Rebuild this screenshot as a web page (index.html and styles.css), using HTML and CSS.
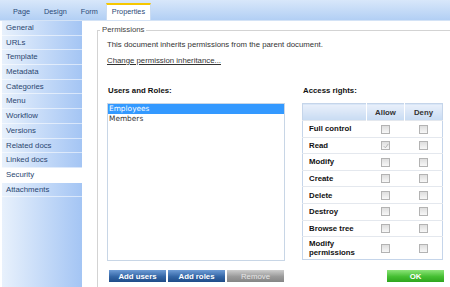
FILE: index.html
```html
<!DOCTYPE html>
<html lang="en">
<head>
    <meta charset="UTF-8">
    <title>Document properties - Security</title>
    <link rel="stylesheet" href="styles.css">
</head>
<body>
    <!-- Tabs -->
    <div class="tabbar">
        <span class="tab">Page</span>
        <span class="tab">Design</span>
        <span class="tab">Form</span>
        <span class="tab tab-active">Properties</span>
    </div>

    <div class="main">
        <!-- Left menu -->
        <ul class="side-menu">
            <li>General</li>
            <li>URLs</li>
            <li>Template</li>
            <li>Metadata</li>
            <li>Categories</li>
            <li>Menu</li>
            <li>Workflow</li>
            <li>Versions</li>
            <li>Related docs</li>
            <li>Linked docs</li>
            <li class="selected">Security</li>
            <li>Attachments</li>
        </ul>

        <div class="content">
            <fieldset class="perm">
                <legend>Permissions</legend>
                <div class="perm-body">
                    <p class="info">This document inherits permissions from the parent document.</p>
                    <p class="info"><a href="#" class="link">Change permission inheritance...</a></p>

                    <div class="columns">
                        <div class="users-col">
                            <div class="label">Users and Roles:</div>
                            <div class="listbox">
                                <div class="list-item sel">Employees</div>
                                <div class="list-item">Members</div>
                            </div>
                            <div class="buttons">
                                <button class="btn btn-blue">Add users</button>
                                <button class="btn btn-blue">Add roles</button>
                                <button class="btn btn-grey">Remove</button>
                            </div>
                        </div>

                        <div class="rights-col">
                            <div class="label">Access rights:</div>
                            <table class="rights">
                                <tr class="head">
                                    <th></th>
                                    <th class="c">Allow</th>
                                    <th class="c">Deny</th>
                                </tr>
                                <tr><td>Full control</td><td class="c"><span class="cb"></span></td><td class="c"><span class="cb"></span></td></tr>
                                <tr><td>Read</td><td class="c"><span class="cb checked"><svg width="6" height="6" viewBox="0 0 6 6"><path d="M0.8 3.2 L2.4 4.8 L5.3 0.9" fill="none" stroke="#b4b4b4" stroke-width="1"/></svg></span></td><td class="c"><span class="cb"></span></td></tr>
                                <tr><td>Modify</td><td class="c"><span class="cb"></span></td><td class="c"><span class="cb"></span></td></tr>
                                <tr><td>Create</td><td class="c"><span class="cb"></span></td><td class="c"><span class="cb"></span></td></tr>
                                <tr><td>Delete</td><td class="c"><span class="cb"></span></td><td class="c"><span class="cb"></span></td></tr>
                                <tr><td>Destroy</td><td class="c"><span class="cb"></span></td><td class="c"><span class="cb"></span></td></tr>
                                <tr><td>Browse tree</td><td class="c"><span class="cb"></span></td><td class="c"><span class="cb"></span></td></tr>
                                <tr class="tall"><td>Modify<br>permissions</td><td class="c"><span class="cb"></span></td><td class="c"><span class="cb"></span></td></tr>
                            </table>
                            <div class="ok-row">
                                <button class="btn btn-green">OK</button>
                            </div>
                        </div>
                    </div>
                </div>
            </fieldset>
        </div>
    </div>
</body>
</html>
```

FILE: styles.css
```css
html, body {
    margin: 0;
    padding: 0;
    height: 287px;
    overflow: hidden;
}
body {
    font-family: "Liberation Sans", Arial, sans-serif;
    font-size: 7.8px;
    color: #333;
    background: #fff;
}
.tabbar {
    height: 20px;
    padding-left: 6px;
    display: flex;
    align-items: flex-end;
    background: linear-gradient(#d8e7fa, #b2cff4);
    border-bottom: 1px solid #d4e3f6;
}
.tab {
    padding: 0 7px;
    height: 15px;
    line-height: 13px;
    font-size: 7.3px;
    color: #2b4a78;
}
.tab-active {
    background-color: #fff;
    border-top: 2px solid #f6c700;
    border-left: 1px solid #c9dbf2;
    border-right: 1px solid #c9dbf2;
    height: 15px;
    padding: 0 5px;
    margin-left: 1px;
    color: #2b4a78;
}
.main {
    display: flex;
}
.side-menu {
    list-style: none;
    margin: 0 0 0 2px;
    padding: 0;
    width: 80px;
    height: 266px;
    background: linear-gradient(to right, #e8f1fc, #a4c5f4);
}
.side-menu li {
    height: 13.7px;
    line-height: 13.7px;
    padding-left: 4px;
    color: #2a4670;
    border-bottom: 1px solid rgba(255, 255, 255, 0.55);
}
.side-menu li.selected {
    background-color: #fff;
}
.content {
    flex: 1;
    padding-left: 15px;
    padding-top: 4px;
}
.perm {
    margin: 0;
    padding: 0;
    border: 1px solid #d3d3d3;
    border-right: none;
    border-bottom: none;
    height: 270px;
}
.perm legend {
    margin-left: 2px;
    padding: 0 2px;
    line-height: 10px;
    color: #444;
}
.perm-body {
    padding-left: 9px;
}
.info {
    margin: 4px 0 0 0;
    line-height: 12px;
}
.link {
    color: #333;
    text-decoration: underline;
}
.columns {
    display: flex;
    gap: 17px;
    margin-top: 18px;
}
.label {
    font-weight: bold;
    color: #111;
    line-height: 12px;
    padding-left: 1px;
    margin-bottom: 6px;
}
.users-col {
    width: 178px;
}
.listbox {
    height: 156px;
    border: 1px solid #c8d6e6;
    background: #fff;
}
.list-item {
    font-family: "DejaVu Sans", sans-serif;
    font-size: 7.4px;
    height: 10px;
    line-height: 10px;
    padding-left: 1px;
    color: #333;
}
.list-item.sel {
    background-color: #3399ff;
    color: #fff;
}
.buttons {
    display: flex;
    gap: 2px;
    margin-top: 9px;
    padding-left: 2px;
}
.btn {
    width: 57px;
    height: 12px;
    padding: 0;
    border: none;
    font-family: "Liberation Sans", Arial, sans-serif;
    font-size: 7.8px;
    font-weight: bold;
    color: #fff;
    cursor: pointer;
}
.btn-blue {
    background: linear-gradient(#6e9cd6, #3466a6 55%, #1f4c88);
}
.btn-grey {
    background: linear-gradient(#cdcdcd, #9a9a9a 55%, #858585);
    color: #e6e6e6;
    font-weight: normal;
}
.btn-green {
    background: linear-gradient(#8be478, #45bf32 55%, #2ea51e);
}
.rights-col {
    width: 141px;
}
.rights {
    width: 141px;
    border-collapse: collapse;
    border: 1px solid #c5d5ea;
    font-weight: bold;
    color: #111;
}
.rights td, .rights th {
    padding: 0 0 0 6px;
    height: 15.6px;
    border-top: 1px solid #e4e8ee;
    line-height: 9px;
}
.rights tr.head th {
    height: 16px;
    background: linear-gradient(#e9f0fb, #c8dbf3);
    color: #333;
    border-left: 1px solid #fff;
    border-top: none;
}
.rights tr.head th:first-child {
    border-left: none;
}
.rights td.c, .rights th.c {
    text-align: center;
    padding: 0;
    width: 37px;
}
.rights tr.tall td {
    height: 22px;
}
.cb {
    display: inline-block;
    width: 7px;
    height: 7px;
    border: 1px solid #b3b3b3;
    background: linear-gradient(#dedede, #f7f7f7);
    vertical-align: middle;
    position: relative;
}
.cb svg {
    position: absolute;
    left: 0.5px;
    top: 0.5px;
}
.ok-row {
    display: flex;
    justify-content: flex-end;
    margin-top: 10px;
    margin-right: -1px;
}
```
